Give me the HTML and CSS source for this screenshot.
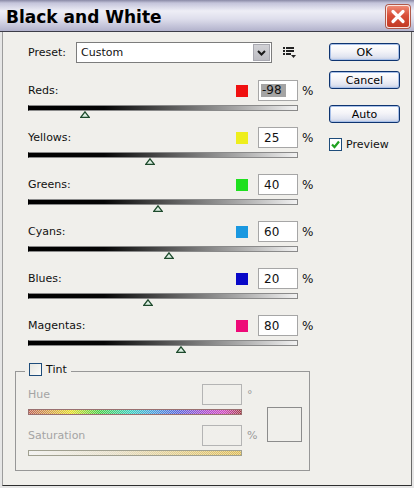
FILE: index.html
```html
<!DOCTYPE html>
<html>
<head>
<meta charset="utf-8">
<link rel="stylesheet" href="styles.css">
</head>
<body>
<div class="titlebar">
  <span class="title">Black and White</span>
  <div class="close">
    <svg width="22" height="21" viewBox="0 0 22 21"><path d="M6 5.5 L16 15.5 M16 5.5 L6 15.5" stroke="#fff" stroke-width="3.2" stroke-linecap="round"/></svg>
  </div>
</div>
<div class="frame">
  <div class="main">
    <div class="preset-row">
      <span class="preset-label">Preset:</span>
      <div class="select">
        <span class="select-text">Custom</span>
        <span class="select-btn"><svg width="9" height="6" viewBox="0 0 9 6"><path d="M1 1 L4.5 4.5 L8 1" fill="none" stroke="#1a1a1a" stroke-width="2"/></svg></span>
      </div>
      <svg class="menu-icon" width="13" height="11" viewBox="0 0 13 11">
        <rect x="0" y="0" width="2" height="2" fill="#222"/><rect x="3" y="0" width="8" height="2" fill="#222"/>
        <rect x="0" y="3" width="2" height="2" fill="#222"/><rect x="3" y="3" width="8" height="2" fill="#222"/>
        <rect x="0" y="6" width="2" height="2" fill="#222"/><rect x="3" y="6" width="5" height="2" fill="#222"/>
        <path d="M8 8 L13 8 L10.5 11 Z" fill="#222"/>
      </svg>
    </div>
    <div class="rows">
      <div class="row">
        <div class="row-top"><span class="label">Reds:</span><span class="swatch c-red"></span><span class="input"><span class="sel">-98</span></span><span class="unit">%</span></div>
        <div class="bar"><svg class="thumb" style="left:51px" width="10" height="7" viewBox="0 0 10 7"><polygon points="5,0.8 9.3,6.3 0.7,6.3" fill="#dcefe2" stroke="#1e4a2c" stroke-width="1.3"/></svg></div>
      </div>
      <div class="row">
        <div class="row-top"><span class="label">Yellows:</span><span class="swatch c-yellow"></span><span class="input">25</span><span class="unit">%</span></div>
        <div class="bar"><svg class="thumb" style="left:116px" width="10" height="7" viewBox="0 0 10 7"><polygon points="5,0.8 9.3,6.3 0.7,6.3" fill="#dcefe2" stroke="#1e4a2c" stroke-width="1.3"/></svg></div>
      </div>
      <div class="row">
        <div class="row-top"><span class="label">Greens:</span><span class="swatch c-green"></span><span class="input">40</span><span class="unit">%</span></div>
        <div class="bar"><svg class="thumb" style="left:124px" width="10" height="7" viewBox="0 0 10 7"><polygon points="5,0.8 9.3,6.3 0.7,6.3" fill="#dcefe2" stroke="#1e4a2c" stroke-width="1.3"/></svg></div>
      </div>
      <div class="row">
        <div class="row-top"><span class="label">Cyans:</span><span class="swatch c-cyan"></span><span class="input">60</span><span class="unit">%</span></div>
        <div class="bar"><svg class="thumb" style="left:135px" width="10" height="7" viewBox="0 0 10 7"><polygon points="5,0.8 9.3,6.3 0.7,6.3" fill="#dcefe2" stroke="#1e4a2c" stroke-width="1.3"/></svg></div>
      </div>
      <div class="row">
        <div class="row-top"><span class="label">Blues:</span><span class="swatch c-blue"></span><span class="input">20</span><span class="unit">%</span></div>
        <div class="bar"><svg class="thumb" style="left:114px" width="10" height="7" viewBox="0 0 10 7"><polygon points="5,0.8 9.3,6.3 0.7,6.3" fill="#dcefe2" stroke="#1e4a2c" stroke-width="1.3"/></svg></div>
      </div>
      <div class="row">
        <div class="row-top"><span class="label">Magentas:</span><span class="swatch c-magenta"></span><span class="input">80</span><span class="unit">%</span></div>
        <div class="bar"><svg class="thumb" style="left:147px" width="10" height="7" viewBox="0 0 10 7"><polygon points="5,0.8 9.3,6.3 0.7,6.3" fill="#dcefe2" stroke="#1e4a2c" stroke-width="1.3"/></svg></div>
      </div>
    </div>
    <div class="tint">
      <div class="legend"><span class="checkbox"></span><span class="legend-text">Tint</span></div>
      <div class="tint-body">
        <div class="tint-col">
          <div class="row-top"><span class="label dim">Hue</span><span class="input dim-input"></span><span class="unit2">°</span></div>
          <div class="hue-bar"></div>
          <div class="row-top sat-row"><span class="label dim">Saturation</span><span class="input dim-input"></span><span class="unit2">%</span></div>
          <div class="sat-bar"></div>
        </div>
        <div class="tint-swatch"></div>
      </div>
    </div>
  </div>
  <div class="side">
    <div class="btn">OK</div>
    <div class="btn btn-cancel">Cancel</div>
    <div class="btn btn-auto">Auto</div>
    <div class="preview"><span class="checkbox checked"><svg width="11" height="11" viewBox="0 0 11 11"><path d="M2 5.5 L4.5 8 L9 2.5" fill="none" stroke="#21a121" stroke-width="2.2"/></svg></span><span>Preview</span></div>
  </div>
</div>
</body>
</html>
```
FILE: styles.css
```css
* { box-sizing: border-box; }
html, body { margin: 0; padding: 0; }
body {
  width: 414px;
  height: 488px;
  overflow: hidden;
  background: #e6e6e6;
  font-family: "DejaVu Sans", sans-serif;
  font-size: 11px;
  color: #111;
}
.titlebar {
  height: 32px;
  border-bottom: 1px solid #3c3c48;
  background: linear-gradient(to bottom, #8a8aa6 0px, #c4c4da 3px, #eeeef6 11px, #dedeec 19px, #b2b2cc 31px);
  display: flex;
  align-items: center;
  justify-content: space-between;
  padding: 0 4px 0 6px;
}
.title {
  font-family: "DejaVu Sans", sans-serif;
  font-weight: bold;
  font-size: 17px;
  color: #000;
  margin-top: 2px;
}
.close {
  width: 24px;
  height: 23px;
  margin-top: 2px;
  border: 1px solid #fbe6e0;
  border-radius: 3px;
  background: linear-gradient(to bottom, #ee8a74 0%, #d9503a 45%, #c23a24 100%);
  box-shadow: 0 0 0 1px #b05a4a;
  display: flex;
  align-items: center;
  justify-content: center;
}
.frame {
  height: 454px;
  margin: 0 2px;
  border-left: 1px solid #9c9c9c;
  border-right: 1px solid #6a6a6a;
  border-bottom: 1px solid #2e2e2e;
  background: #f0efeb;
  display: flex;
  padding-top: 10px;
}
.main { width: 310px; }
.preset-row {
  margin-left: 25px;
  height: 21px;
  display: flex;
  align-items: center;
}
.preset-label { width: 48px; }
.select {
  width: 196px;
  height: 21px;
  border: 1px solid #7c7c7c;
  background: #fff;
  display: flex;
  align-items: center;
  justify-content: space-between;
  padding: 1px;
}
.select-text { padding-left: 3px; }
.select-btn {
  width: 17px;
  height: 17px;
  background: linear-gradient(to bottom, #d2d2d6, #bcbcc2);
  border: 1px solid #a8a8b0;
  display: flex;
  align-items: center;
  justify-content: center;
}
.menu-icon { margin-left: 11px; }
.rows {
  margin-left: 25px;
  margin-top: 17px;
  display: flex;
  flex-direction: column;
  gap: 16px;
}
.row-top {
  height: 21px;
  display: flex;
  align-items: center;
}
.label { flex: 1; }
.swatch {
  width: 12px;
  height: 12px;
  margin-right: 10px;
}
.c-red { background: #f01010; }
.c-yellow { background: #eeee1c; }
.c-green { background: #1ee01e; }
.c-cyan { background: #1a98e0; }
.c-blue { background: #0808c8; }
.c-magenta { background: #ee0a78; }
.input {
  width: 40px;
  height: 21px;
  border: 1px solid #a6a6a6;
  background: #fff;
  font-size: 12px;
  padding-left: 5px;
  display: flex;
  align-items: center;
}
.sel {
  background: #a4a4a4;
  margin-left: -3px;
  padding: 0 4px 0 1px;
  line-height: 13px;
}
.unit {
  width: 15px;
  padding-left: 4px;
  font-size: 12px;
}
.bar {
  position: relative;
  margin-top: 4px;
  width: 270px;
  height: 6px;
  border: 1px solid #8a8a8a;
  border-left-color: #000;
  background: linear-gradient(to right, #000 0%, #050505 28%, #555 52%, #a8a8a8 78%, #f2f2f2 100%);
}
.thumb {
  position: absolute;
  top: 5px;
}
.tint {
  margin-left: 12px;
  margin-top: 25px;
  width: 295px;
  border: 1px solid #979797;
  padding-bottom: 14px;
}
.legend {
  width: fit-content;
  margin: -9px 0 0 9px;
  padding: 0 4px;
  background: #f0efeb;
  display: flex;
  align-items: center;
  gap: 4px;
  height: 13px;
}
.checkbox {
  width: 13px;
  height: 13px;
  border: 1px solid #1e4c7a;
  background: linear-gradient(135deg, #e6e6e0, #fcfcfa);
  display: inline-flex;
  align-items: center;
  justify-content: center;
}
.legend-text { font-size: 11px; }
.tint-body {
  display: flex;
  padding-left: 12px;
  margin-top: 8px;
}
.tint-col { width: 228px; }
.dim { color: #a4a4a4; }
.dim-input { border-color: #b4b4b4; background: #f0efeb; }
.unit2 {
  width: 14px;
  padding-left: 5px;
  color: #9a9a9a;
  font-size: 11px;
}
.hue-bar, .sat-bar {
  margin-top: 4px;
  width: 214px;
  height: 6px;
}
.hue-bar {
  border: 1px solid #9a7070;
  background:
    repeating-conic-gradient(rgba(240,239,235,0.55) 0 25%, transparent 0 50%) 0 0 / 2px 2px,
    linear-gradient(to right, #c06050 0%, #d8a040 10%, #e8e020 20%, #40d040 33%, #30d0c0 48%, #40a0e0 58%, #5060e0 70%, #b040d0 84%, #d040c0 92%, #a03040 100%);
}
.sat-row { margin-top: 10px; }
.sat-bar {
  border: 1px solid #a0a090;
  background:
    repeating-conic-gradient(rgba(240,239,235,0.55) 0 25%, transparent 0 50%) 0 0 / 2px 2px,
    linear-gradient(to right, #f4f4f4 0%, #e8e0c8 40%, #e4cc80 75%, #e0bc50 100%);
}
.tint-swatch {
  margin-left: 11px;
  margin-top: 23px;
  width: 35px;
  height: 35px;
  border: 1px solid #8c8c8c;
}
.side {
  margin-left: 16px;
  padding-top: 1px;
  display: flex;
  flex-direction: column;
}
.btn {
  width: 71px;
  height: 18px;
  border: 1px solid #0e3470;
  border-radius: 3px;
  background: linear-gradient(to bottom, #ffffff 0%, #f4f4f8 45%, #e0e4f0 80%, #c4cce4 100%);
  box-shadow: inset 0 0 0 1px #a8c0e8;
  display: flex;
  align-items: center;
  justify-content: center;
  font-size: 11px;
  color: #000;
}
.btn-cancel { margin-top: 10px; }
.btn-auto { margin-top: 16px; }
.preview {
  margin-top: 15px;
  display: flex;
  align-items: center;
  gap: 4px;
  font-size: 11px;
}
.checked { background: #fff; }
```
